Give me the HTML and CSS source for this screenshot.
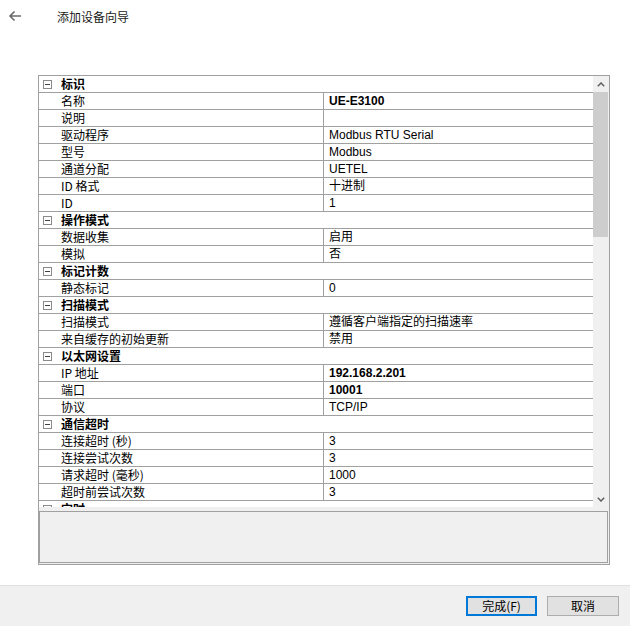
FILE: index.html
```html
<!DOCTYPE html>
<html lang="zh-CN">
<head>
  <meta charset="UTF-8">
  <title>添加设备向导</title>
  <link rel="stylesheet" href="styles.css">
</head>
<body>
  <div class="page">
    <div class="header">
      <svg class="back" width="14" height="12" viewBox="0 0 14 12">
        <path d="M13 6H2M6.5 1.5L2 6l4.5 4.5" fill="none" stroke="#6b6b6b" stroke-width="1.6"/>
      </svg>
      <div class="title">添加设备向导</div>
    </div>

    <div class="panel">
      <div class="grid">
        <div class="rows">
          <div class="row cat"><span class="toggle"><i class="minus"></i></span><span class="name">标识</span></div>
          <div class="row"><span class="toggle"></span><span class="name">名称</span><span class="val bold">UE-E3100</span></div>
          <div class="row"><span class="toggle"></span><span class="name">说明</span><span class="val"></span></div>
          <div class="row"><span class="toggle"></span><span class="name">驱动程序</span><span class="val">Modbus RTU Serial</span></div>
          <div class="row"><span class="toggle"></span><span class="name">型号</span><span class="val">Modbus</span></div>
          <div class="row"><span class="toggle"></span><span class="name">通道分配</span><span class="val">UETEL</span></div>
          <div class="row"><span class="toggle"></span><span class="name">ID 格式</span><span class="val">十进制</span></div>
          <div class="row"><span class="toggle"></span><span class="name">ID</span><span class="val">1</span></div>

          <div class="row cat"><span class="toggle"><i class="minus"></i></span><span class="name">操作模式</span></div>
          <div class="row"><span class="toggle"></span><span class="name">数据收集</span><span class="val">启用</span></div>
          <div class="row"><span class="toggle"></span><span class="name">模拟</span><span class="val">否</span></div>

          <div class="row cat"><span class="toggle"><i class="minus"></i></span><span class="name">标记计数</span></div>
          <div class="row"><span class="toggle"></span><span class="name">静态标记</span><span class="val">0</span></div>

          <div class="row cat"><span class="toggle"><i class="minus"></i></span><span class="name">扫描模式</span></div>
          <div class="row"><span class="toggle"></span><span class="name">扫描模式</span><span class="val">遵循客户端指定的扫描速率</span></div>
          <div class="row"><span class="toggle"></span><span class="name">来自缓存的初始更新</span><span class="val">禁用</span></div>

          <div class="row cat"><span class="toggle"><i class="minus"></i></span><span class="name">以太网设置</span></div>
          <div class="row"><span class="toggle"></span><span class="name">IP 地址</span><span class="val bold">192.168.2.201</span></div>
          <div class="row"><span class="toggle"></span><span class="name">端口</span><span class="val bold">10001</span></div>
          <div class="row"><span class="toggle"></span><span class="name">协议</span><span class="val">TCP/IP</span></div>

          <div class="row cat"><span class="toggle"><i class="minus"></i></span><span class="name">通信超时</span></div>
          <div class="row"><span class="toggle"></span><span class="name">连接超时 (秒)</span><span class="val">3</span></div>
          <div class="row"><span class="toggle"></span><span class="name">连接尝试次数</span><span class="val">3</span></div>
          <div class="row"><span class="toggle"></span><span class="name">请求超时 (毫秒)</span><span class="val">1000</span></div>
          <div class="row"><span class="toggle"></span><span class="name">超时前尝试次数</span><span class="val">3</span></div>

          <div class="row cat"><span class="toggle"><i class="minus"></i></span><span class="name">定时</span></div>
        </div>

        <div class="scroll">
          <div class="arrow">
            <svg width="8" height="5" viewBox="0 0 8 5"><path d="M0.8 4.2L4 1l3.2 3.2" fill="none" stroke="#606060" stroke-width="1.5"/></svg>
          </div>
          <div class="thumb"></div>
          <div class="track"></div>
          <div class="arrow">
            <svg width="8" height="5" viewBox="0 0 8 5"><path d="M0.8 0.8L4 4l3.2-3.2" fill="none" stroke="#606060" stroke-width="1.5"/></svg>
          </div>
        </div>
      </div>
      <div class="desc"></div>
    </div>

    <div class="footer">
      <button class="btn primary">完成(F)</button>
      <button class="btn">取消</button>
    </div>
  </div>
</body>
</html>
```

FILE: styles.css
```css
body {
  margin: 0;
  font-family: "Noto Sans CJK SC", "Liberation Sans", sans-serif;
  font-size: 12px;
  color: #000;
  background: #fff;
}
.page {
  height: 626px;
  display: flex;
  flex-direction: column;
}
.header {
  height: 32px;
  display: flex;
  align-items: center;
  padding-left: 8px;
}
.title {
  margin-left: 35px;
  color: #1a1a1a;
}
.panel {
  margin: 43px 0 0 38px;
  width: 570px;
  border: 1px solid #a0a0a0;
  background: #f0f0f0;
}
.grid {
  display: flex;
  height: 431px;
  background: #fff;
}
.rows {
  flex: 1;
  overflow: hidden;
}
.row {
  display: flex;
  height: 16px;
  line-height: 16px;
  border-bottom: 1px solid #a0a0a0;
}
.toggle {
  width: 18px;
  padding-left: 4px;
  display: flex;
  align-items: center;
}
.minus {
  width: 7px;
  height: 7px;
  border: 1px solid #8a8a8a;
  background: linear-gradient(#404040, #404040) center / 5px 1px no-repeat;
}
.name {
  width: 262px;
  border-right: 1px solid #a0a0a0;
  white-space: nowrap;
  overflow: hidden;
}
.cat .name {
  border-right: none;
  font-weight: bold;
}
.val {
  padding-left: 5px;
  font-family: "Liberation Sans", "Noto Sans CJK SC", sans-serif;
  white-space: nowrap;
}
.bold {
  font-weight: bold;
}
.scroll {
  width: 16px;
  background: #f0f0f0;
  display: flex;
  flex-direction: column;
}
.arrow {
  height: 16px;
  display: flex;
  align-items: center;
  justify-content: center;
}
.thumb {
  height: 145px;
  margin-right: 1px;
  background: #cdcdcd;
}
.track {
  flex: 1;
}
.desc {
  height: 50px;
  margin: 4px 1px 1px 0;
  border: 1px solid #a0a0a0;
  background: #f0f0f0;
}
.footer {
  margin-top: auto;
  height: 30px;
  padding: 10px 11px 0 0;
  border-top: 1px solid #dfdfdf;
  background: #f0f0f0;
  display: flex;
  justify-content: flex-end;
  align-items: flex-start;
  gap: 10px;
}
.btn {
  width: 72px;
  height: 20px;
  box-sizing: border-box;
  border: 1px solid #adadad;
  background: #e1e1e1;
  font-family: "Noto Sans CJK SC", sans-serif;
  font-size: 12px;
  line-height: 16px;
  padding: 0;
  color: #000;
}
.primary {
  width: 71px;
  border: 2px solid #0078d7;
}
```
